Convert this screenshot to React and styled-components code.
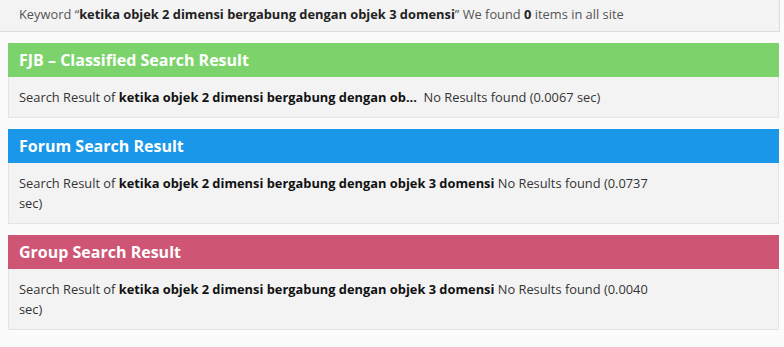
import React from 'react';
import styled, { createGlobalStyle } from 'styled-components';

const GlobalStyle = createGlobalStyle`
  body {
    margin: 0;
    background: #fbfbfb;
    font-family: 'Open Sans', 'Liberation Sans', sans-serif;
    font-size: 13px;
    color: #333;
  }
`;

const Page = styled.div`
  width: 784px;
  padding-bottom: 16px;
`;

const KeywordBar = styled.div`
  width: 760px;
  height: 31px;
  line-height: 29px;
  padding-left: 19px;
  background: #f3f3f3;
  border-right: 1px solid #dcdcdc;
  border-bottom: 1px solid #dcdcdc;
  color: #555;
  font-size: 12.85px;
  b {
    color: #222;
  }
`;

const Panel = styled.section`
  margin: 11px 5px 0 8px;
  width: 771px;
`;

const PanelHeader = styled.h2`
  margin: 0;
  height: 34px;
  line-height: 35px;
  padding-left: 11px;
  background: ${p => p.color};
  color: #fff;
  font-size: 16px;
  font-weight: 700;
`;

const PanelBody = styled.div`
  background: #f3f3f3;
  border: 1px solid #e4e4e4;
  border-top: none;
  padding: 10px 10px 10px 10px;
  line-height: 20px;
  color: #333;
  font-size: 12.85px;
`;

const ResultText = styled.div`
  max-width: 648px;
  b {
    color: #111;
  }
`;

const keyword = 'ketika objek 2 dimensi bergabung dengan objek 3 domensi';

const panels = [
  { title: 'FJB – Classified Search Result', color: '#7dd36b', term: 'ketika objek 2 dimensi bergabung dengan ob...', gap: true, time: '0.0067' },
  { title: 'Forum Search Result', color: '#1a97e8', term: keyword, time: '0.0737' },
  { title: 'Group Search Result', color: '#cf5575', term: keyword, time: '0.0040' },
];

export default function App() {
  return (
    <Page>
      <GlobalStyle />
      <KeywordBar>
        Keyword “<b>{keyword}</b>” We found <b>0</b> items in all site
      </KeywordBar>
      {panels.map(p => (
        <Panel key={p.title}>
          <PanelHeader color={p.color}>{p.title}</PanelHeader>
          <PanelBody>
            <ResultText>
              Search Result of <b>{p.term}</b>{p.gap ? '\u00a0\u00a0' : ' '}No Results found ({p.time} sec)
            </ResultText>
          </PanelBody>
        </Panel>
      ))}
    </Page>
  );
}
